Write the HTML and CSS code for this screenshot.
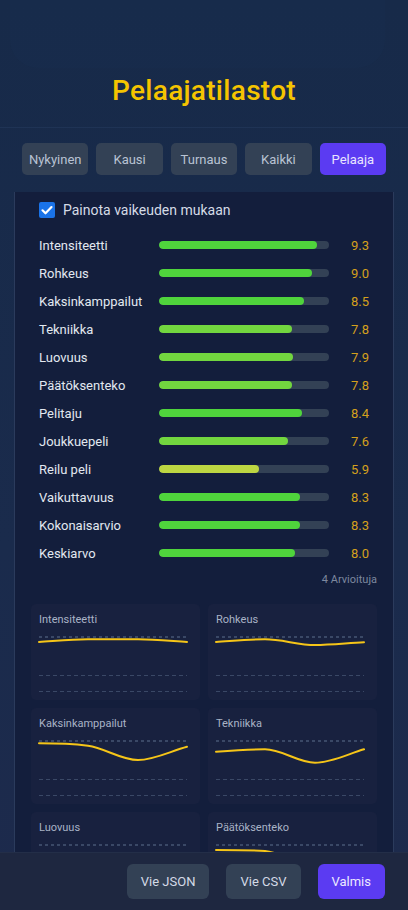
FILE: index.html
```html
<!DOCTYPE html>
<html lang="fi">
<head>
<meta charset="utf-8">
<title>Pelaajatilastot</title>
<link rel="stylesheet" href="styles.css">
</head>
<body>
<div class="sheet">
  <header class="header">
    <h1 class="title">Pelaajatilastot</h1>
  </header>
  <nav class="tabs">
    <button class="tab">Nykyinen</button>
    <button class="tab">Kausi</button>
    <button class="tab">Turnaus</button>
    <button class="tab">Kaikki</button>
    <button class="tab active">Pelaaja</button>
  </nav>
  <main class="scroll">
    <section class="panel">
      <label class="check">
        <span class="box"><svg viewBox="0 0 16 16" width="16" height="16"><path d="M3.5 8.3l3 3 6-6.2" fill="none" stroke="#fff" stroke-width="2.2" stroke-linecap="round" stroke-linejoin="round"/></svg></span>
        <span>Painota vaikeuden mukaan</span>
      </label>
      <div class="stats">
        <div class="row"><span class="name">Intensiteetti</span><span class="track"><span class="fill high" style="width:93%"></span></span><span class="val">9.3</span></div>
        <div class="row"><span class="name">Rohkeus</span><span class="track"><span class="fill high" style="width:90%"></span></span><span class="val">9.0</span></div>
        <div class="row"><span class="name">Kaksinkamppailut</span><span class="track"><span class="fill high" style="width:85%"></span></span><span class="val">8.5</span></div>
        <div class="row"><span class="name">Tekniikka</span><span class="track"><span class="fill mid" style="width:78%"></span></span><span class="val">7.8</span></div>
        <div class="row"><span class="name">Luovuus</span><span class="track"><span class="fill mid" style="width:79%"></span></span><span class="val">7.9</span></div>
        <div class="row"><span class="name">Päätöksenteko</span><span class="track"><span class="fill mid" style="width:78%"></span></span><span class="val">7.8</span></div>
        <div class="row"><span class="name">Pelitaju</span><span class="track"><span class="fill high" style="width:84%"></span></span><span class="val">8.4</span></div>
        <div class="row"><span class="name">Joukkuepeli</span><span class="track"><span class="fill mid" style="width:76%"></span></span><span class="val">7.6</span></div>
        <div class="row"><span class="name">Reilu peli</span><span class="track"><span class="fill low" style="width:59%"></span></span><span class="val">5.9</span></div>
        <div class="row"><span class="name">Vaikuttavuus</span><span class="track"><span class="fill high" style="width:83%"></span></span><span class="val">8.3</span></div>
        <div class="row"><span class="name">Kokonaisarvio</span><span class="track"><span class="fill high" style="width:83%"></span></span><span class="val">8.3</span></div>
        <div class="row"><span class="name">Keskiarvo</span><span class="track"><span class="fill high" style="width:80%"></span></span><span class="val">8.0</span></div>
      </div>
      <div class="count">4 Arvioituja</div>
      <div class="charts">
        <div class="card">
          <div class="ctitle">Intensiteetti</div>
          <svg class="chart" viewBox="0 0 148 56" width="148" height="56">
            <line class="g1" x1="0" y1="1" x2="148" y2="1"/><line class="g2" x1="0" y1="39.5" x2="148" y2="39.5"/><line class="g2" x1="0" y1="55.5" x2="148" y2="55.5"/>
            <path class="ln" d="M0 6 C16 5, 33 3.3, 49 3.3 C66 3.3, 82 3.3, 99 3.3 C115 3.3, 132 5, 148 6"/>
          </svg>
        </div>
        <div class="card">
          <div class="ctitle">Rohkeus</div>
          <svg class="chart" viewBox="0 0 148 56" width="148" height="56">
            <line class="g1" x1="0" y1="1" x2="148" y2="1"/><line class="g2" x1="0" y1="39.5" x2="148" y2="39.5"/><line class="g2" x1="0" y1="55.5" x2="148" y2="55.5"/>
            <path class="ln" d="M0 6 C16 5, 33 3.3, 49 3.3 C66 3.3, 82 9, 99 9 C115 9, 132 7, 148 6.3"/>
          </svg>
        </div>
        <div class="card">
          <div class="ctitle">Kaksinkamppailut</div>
          <svg class="chart" viewBox="0 0 148 56" width="148" height="56">
            <line class="g1" x1="0" y1="1" x2="148" y2="1"/><line class="g2" x1="0" y1="39.5" x2="148" y2="39.5"/><line class="g2" x1="0" y1="55.5" x2="148" y2="55.5"/>
            <path class="ln" d="M0 3.3 C16 3.3, 33 3.8, 49 5.7 C66 8, 82 20, 99 20 C115 20, 132 11, 148 6.7"/>
          </svg>
        </div>
        <div class="card">
          <div class="ctitle">Tekniikka</div>
          <svg class="chart" viewBox="0 0 148 56" width="148" height="56">
            <line class="g1" x1="0" y1="1" x2="148" y2="1"/><line class="g2" x1="0" y1="39.5" x2="148" y2="39.5"/><line class="g2" x1="0" y1="55.5" x2="148" y2="55.5"/>
            <path class="ln" d="M0 11.7 C16 10.5, 33 9.3, 49 9.3 C66 9.3, 82 22.7, 99 22.7 C115 22.7, 132 14, 148 9.3"/>
          </svg>
        </div>
        <div class="card">
          <div class="ctitle">Luovuus</div>
          <svg class="chart" viewBox="0 0 148 56" width="148" height="56">
            <line class="g1" x1="0" y1="1" x2="148" y2="1"/><line class="g2" x1="0" y1="39.5" x2="148" y2="39.5"/><line class="g2" x1="0" y1="55.5" x2="148" y2="55.5"/>
            <path class="ln" d="M0 14 C16 13, 33 12, 49 12 C66 12, 82 20, 99 20 C115 20, 132 15, 148 13"/>
          </svg>
        </div>
        <div class="card">
          <div class="ctitle">Päätöksenteko</div>
          <svg class="chart" viewBox="0 0 148 56" width="148" height="56">
            <line class="g1" x1="0" y1="1" x2="148" y2="1"/><line class="g2" x1="0" y1="39.5" x2="148" y2="39.5"/><line class="g2" x1="0" y1="55.5" x2="148" y2="55.5"/>
            <path class="ln" d="M0 6 C16 6, 33 6, 49 7 C66 9, 82 20, 99 20 C115 20, 132 13, 148 10"/>
          </svg>
        </div>
      </div>
    </section>
  </main>
  <footer class="footer">
    <button class="btn">Vie JSON</button>
    <button class="btn">Vie CSV</button>
    <button class="btn primary">Valmis</button>
  </footer>
</div>
</body>
</html>
```

FILE: styles.css
```css
* { box-sizing: border-box; }
html, body { margin: 0; padding: 0; }
body {
  width: 408px;
  height: 910px;
  overflow: hidden;
  background: linear-gradient(180deg, #172a49 0%, #1a2b4c 60%, #1d2a4c 100%);
  font-family: Roboto, "Liberation Sans", sans-serif;
  color: #e2e8f0;
}
.sheet {
  height: 910px;
  display: flex;
  flex-direction: column;
}
.header {
  position: relative;
  height: 128px;
  border-bottom: 1px solid #1f3355;
  display: flex;
  align-items: flex-end;
  justify-content: center;
  padding-bottom: 20px;
}
.header::before {
  content: "";
  position: absolute;
  left: 10px;
  right: 23px;
  top: -40px;
  height: 108px;
  border-radius: 28px;
  background: rgba(40, 70, 110, 0.05);
}
.title {
  position: relative;
  margin: 0;
  font-size: 28px;
  font-weight: 500;
  color: #f5c400;
  letter-spacing: 0.3px;
}
.tabs {
  display: flex;
  gap: 8px;
  padding: 15px 22px 17px;
}
.tab {
  flex: 1;
  height: 32px;
  border: 0;
  border-radius: 5px;
  background: #334155;
  color: #b9c3d3;
  font-family: inherit;
  font-size: 13px;
  padding: 0;
}
.tab.active { background: #5b3bf2; color: #e8e4ff; }
.scroll {
  flex: 1;
  overflow: hidden;
  padding: 0 14px;
}
.panel {
  background: #131e3c;
  border-left: 1px solid #2b3b5c;
  border-right: 1px solid #2b3b5c;
  padding: 10px 16px 20px;
  min-height: 100%;
}
.check {
  display: flex;
  align-items: center;
  gap: 8px;
  padding-left: 8px;
  font-size: 14px;
  color: #d5dbe6;
  height: 16px;
}
.box {
  width: 16px;
  height: 16px;
  border-radius: 2px;
  background: #1a73e8;
  display: block;
}
.box svg { display: block; }
.stats {
  margin-top: 13px;
  padding: 0 8px;
  display: flex;
  flex-direction: column;
}
.row {
  height: 28px;
  display: grid;
  grid-template-columns: 120px 170px 40px;
  align-items: center;
}
.name { font-size: 13px; color: #e2e8f0; white-space: nowrap; }
.track {
  height: 8px;
  border-radius: 4px;
  background: #334155;
  overflow: hidden;
  display: block;
}
.fill { display: block; height: 100%; border-radius: 4px; }
.fill.high { background: #4fd43c; }
.fill.mid { background: #72d63f; }
.fill.low { background: #bdd642; }
.val { text-align: right; font-size: 13px; color: #d4a01c; }
.count {
  text-align: right;
  font-size: 11px;
  color: #7d889f;
  margin-top: 6px;
  height: 13px;
}
.charts {
  margin-top: 18px;
  display: grid;
  grid-template-columns: 1fr 1fr;
  gap: 8px;
}
.card {
  background: #18213f;
  border-radius: 5px;
  height: 96px;
  padding: 9px 8px 0;
}
.ctitle { font-size: 11px; color: #a9b3c6; height: 14px; line-height: 14px; }
.chart { display: block; margin-top: 9px; overflow: visible; }
.g1 { stroke: #3a4866; stroke-width: 2; stroke-dasharray: 3 3; }
.g2 { stroke: #3a4866; stroke-width: 1; stroke-dasharray: 4 3; }
.ln { fill: none; stroke: #f5c518; stroke-width: 2; stroke-linecap: round; }
.footer {
  height: 58px;
  background: #1e2740;
  border-top: 1px solid #232e48;
  display: flex;
  justify-content: flex-end;
  align-items: center;
  gap: 17px;
  padding: 0 23px 1px 0;
}
.btn {
  height: 35px;
  border: 0;
  border-radius: 6px;
  background: #334155;
  color: #d3dae6;
  font-family: inherit;
  font-size: 13px;
  padding: 0 14px;
}
.btn.primary { background: #5b3bf2; color: #ece9ff; }
```
